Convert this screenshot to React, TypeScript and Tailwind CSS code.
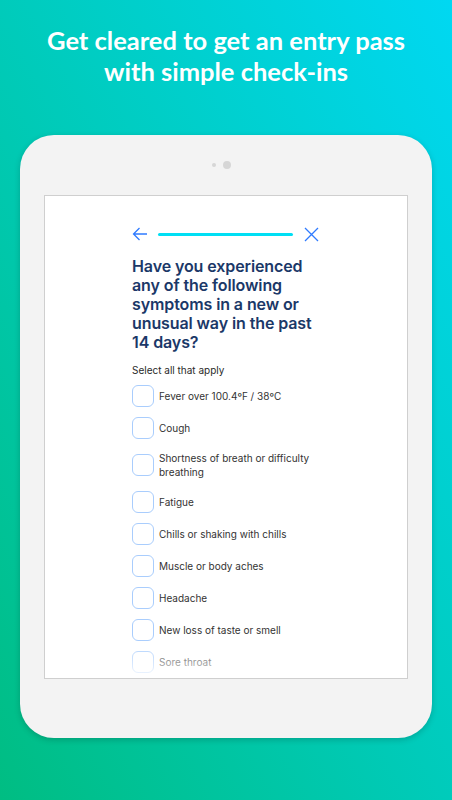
import React from 'react';

const symptoms = [
  'Fever over 100.4ºF / 38ºC',
  'Cough',
  'Shortness of breath or difficulty breathing',
  'Fatigue',
  'Chills or shaking with chills',
  'Muscle or body aches',
  'Headache',
  'New loss of taste or smell',
  'Sore throat',
];

const App: React.FC = () => {
  return (
    <div className="relative w-[452px] h-[800px] overflow-hidden bg-linear-to-tr from-[#00bd82] to-[#00d8f2] font-['Lato',sans-serif]">
      {/* headline */}
      <h1 className="pt-[25px] text-center text-[25.5px] leading-[31px] font-bold text-white">
        Get cleared to get an entry pass
        <br />
        with simple check-ins
      </h1>

      {/* tablet */}
      <div className="mx-[20px] mt-[48px] h-[603px] rounded-[34px] bg-[#f3f3f3] shadow-[0_2px_6px_rgba(0,0,0,0.18)] flex flex-col items-center">
        <div className="flex items-center gap-[7px] h-[60px] mr-[10px]">
          <span className="w-[4px] h-[4px] rounded-full bg-[#d6d6d6]" />
          <span className="w-[8px] h-[8px] rounded-full bg-[#d6d6d6]" />
        </div>

        {/* screen */}
        <div className="relative w-[364px] h-[484px] bg-white border border-[#cfcfcf] overflow-hidden font-['Inter',sans-serif]">
          <div className="w-[188px] mx-auto pt-[30px]">
            {/* top bar */}
            <div className="flex items-center h-[16px]">
              <svg width="16" height="14" viewBox="0 0 16 14" fill="none" stroke="#2f7bff" strokeWidth="1.3">
                <path d="M15 7H1.5M7.5 1L1.5 7l6 6" />
              </svg>
              <div className="ml-[10px] w-[135px] h-[3px] rounded-full bg-[#00dff4]" />
              <svg className="ml-[11px]" width="15" height="15" viewBox="0 0 15 15" fill="none" stroke="#2f7bff" strokeWidth="1.3">
                <path d="M1 1l13 13M14 1L1 14" />
              </svg>
            </div>

            <h2 className="mt-[15px] text-[16px] leading-[19px] font-semibold text-[#1b3868] tracking-[-0.1px]">
              Have you experienced any of the following symptoms in a new or unusual way in the past 14 days?
            </h2>

            <p className="mt-[11px] text-[10px] leading-[14px] text-[#2a2a2a]">Select all that apply</p>

            <div className="mt-[8px] flex flex-col gap-[10px]">
              {symptoms.map((s) => (
                <div key={s} className="flex items-center gap-[5px]">
                  <span className="shrink-0 w-[22px] h-[22px] rounded-[6px] border border-[#a9cdfd]" />
                  <span className="py-[2px] text-[10px] leading-[14px] text-[#333333]">{s}</span>
                </div>
              ))}
            </div>
          </div>
          <div className="absolute left-0 right-0 bottom-0 h-[38px] bg-linear-to-b from-white/0 to-white/85" />
        </div>
      </div>
    </div>
  );
};

export default App;
